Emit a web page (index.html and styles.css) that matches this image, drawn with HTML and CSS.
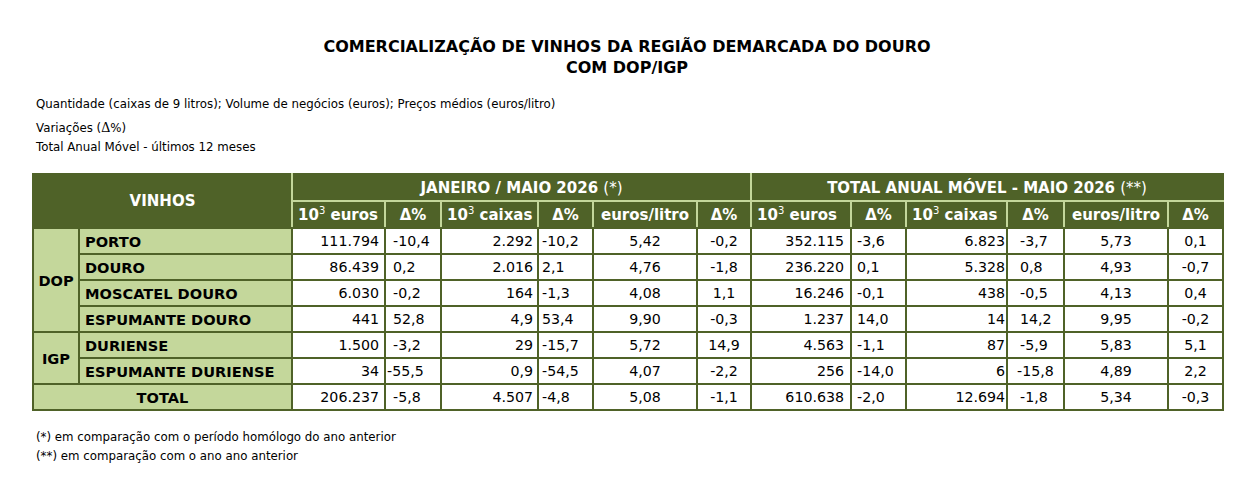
FILE: index.html
```html
<!DOCTYPE html>
<html lang="pt">
<head>
<meta charset="utf-8">
<title>Comercialização de Vinhos da Região Demarcada do Douro</title>
<link rel="stylesheet" href="styles.css">
</head>
<body>
<div class="page">
  <h1 class="title">COMERCIALIZAÇÃO DE VINHOS DA REGIÃO DEMARCADA DO DOURO<br>COM DOP/IGP</h1>
  <div class="notes">
    <p class="note n1">Quantidade (caixas de 9 litros); Volume de negócios (euros); Preços médios (euros/litro)</p>
    <p class="note n2">Variações (<span class="delta">Δ</span>%)</p>
    <p class="note n3">Total Anual Móvel - últimos 12 meses</p>
  </div>
  <table class="wine">
    <colgroup>
      <col class="c-grp"><col class="c-name">
      <col class="c-eur"><col class="c-d1"><col class="c-cx"><col class="c-d2"><col class="c-el"><col class="c-d3">
      <col class="c-eur2"><col class="c-d4"><col class="c-cx2"><col class="c-d5"><col class="c-el2"><col class="c-d6">
    </colgroup>
    <thead>
      <tr class="h1">
        <th colspan="2" rowspan="2" class="vinhos">VINHOS</th>
        <th colspan="6" class="grp">JANEIRO / MAIO 2026 <span class="ast">(*)</span></th>
        <th colspan="6" class="grp">TOTAL ANUAL MÓVEL - MAIO 2026 <span class="ast">(**)</span></th>
      </tr>
      <tr class="h2">
        <th class="hl">10<sup>3</sup> euros</th><th>Δ%</th><th class="hl">10<sup>3</sup> caixas</th><th>Δ%</th><th>euros/litro</th><th>Δ%</th>
        <th class="hl">10<sup>3</sup> euros</th><th>Δ%</th><th class="hl">10<sup>3</sup> caixas</th><th>Δ%</th><th>euros/litro</th><th>Δ%</th>
      </tr>
    </thead>
    <tbody>
      <tr>
        <td rowspan="4" class="grp-cell">DOP</td>
        <td class="name">PORTO</td>
        <td class="r a">111.794</td><td class="d d1">-10,4</td><td class="r b">2.292</td><td class="d d2">-10,2</td><td class="c">5,42</td><td class="c">-0,2</td>
        <td class="r e">352.115</td><td class="d d4">-3,6</td><td class="r f">6.823</td><td class="d d5">-3,7</td><td class="c">5,73</td><td class="c">0,1</td>
      </tr>
      <tr>
        <td class="name">DOURO</td>
        <td class="r a">86.439</td><td class="d d1">0,2</td><td class="r b">2.016</td><td class="d d2">2,1</td><td class="c">4,76</td><td class="c">-1,8</td>
        <td class="r e">236.220</td><td class="d d4">0,1</td><td class="r f">5.328</td><td class="d d5">0,8</td><td class="c">4,93</td><td class="c">-0,7</td>
      </tr>
      <tr>
        <td class="name">MOSCATEL DOURO</td>
        <td class="r a">6.030</td><td class="d d1">-0,2</td><td class="r b">164</td><td class="d d2">-1,3</td><td class="c">4,08</td><td class="c">1,1</td>
        <td class="r e">16.246</td><td class="d d4">-0,1</td><td class="r f">438</td><td class="d d5">-0,5</td><td class="c">4,13</td><td class="c">0,4</td>
      </tr>
      <tr>
        <td class="name">ESPUMANTE DOURO</td>
        <td class="r a">441</td><td class="d d1">52,8</td><td class="r b">4,9</td><td class="d d2">53,4</td><td class="c">9,90</td><td class="c">-0,3</td>
        <td class="r e">1.237</td><td class="d d4">14,0</td><td class="r f">14</td><td class="d d5">14,2</td><td class="c">9,95</td><td class="c">-0,2</td>
      </tr>
      <tr>
        <td rowspan="2" class="grp-cell">IGP</td>
        <td class="name">DURIENSE</td>
        <td class="r a">1.500</td><td class="d d1">-3,2</td><td class="r b">29</td><td class="d d2">-15,7</td><td class="c">5,72</td><td class="c">14,9</td>
        <td class="r e">4.563</td><td class="d d4">-1,1</td><td class="r f">87</td><td class="d d5">-5,9</td><td class="c">5,83</td><td class="c">5,1</td>
      </tr>
      <tr>
        <td class="name">ESPUMANTE DURIENSE</td>
        <td class="r a">34</td><td class="d d1 long">-55,5</td><td class="r b">0,9</td><td class="d d2">-54,5</td><td class="c">4,07</td><td class="c">-2,2</td>
        <td class="r e">256</td><td class="d d4">-14,0</td><td class="r f">6</td><td class="d d5 long">-15,8</td><td class="c">4,89</td><td class="c">2,2</td>
      </tr>
      <tr class="total">
        <td colspan="2" class="total-cell">TOTAL</td>
        <td class="r a">206.237</td><td class="d d1">-5,8</td><td class="r b">4.507</td><td class="d d2">-4,8</td><td class="c">5,08</td><td class="c">-1,1</td>
        <td class="r e">610.638</td><td class="d d4">-2,0</td><td class="r f">12.694</td><td class="d d5">-1,8</td><td class="c">5,34</td><td class="c">-0,3</td>
      </tr>
    </tbody>
  </table>
  <div class="foot">
    <p class="note">(*) em comparação com o período homólogo do ano anterior</p>
    <p class="note">(**) em comparação com o ano ano anterior</p>
  </div>
</div>
</body>
</html>
```
FILE: styles.css
```css
html, body {
  margin: 0;
  padding: 0;
  background: #ffffff;
}
body {
  font-family: "DejaVu Sans", Verdana, sans-serif;
  color: #000;
}
.page {
  padding: 36px 0 0 32px;
  width: 1190px;
}
.title {
  margin: 0;
  font-size: 16px;
  line-height: 21px;
  font-weight: bold;
  text-align: center;
  width: 1190px;
}
.notes {
  margin-top: 17px;
}
.note {
  margin: 0 0 0 4px;
  font-size: 11.8px;
  line-height: 19px;
}
.n1 { height: 23px; }
.delta {
  font-family: "Liberation Serif", "DejaVu Serif", serif;
  font-size: 14px;
}
.wine {
  margin-top: 16px;
  border-collapse: collapse;
  table-layout: fixed;
  width: 1190px;
  font-size: 14.2px;
}
.c-grp { width: 46px; }
.c-name { width: 213px; }
.c-eur { width: 93px; }
.c-d1 { width: 56px; }
.c-cx { width: 97px; }
.c-d2 { width: 55px; }
.c-el { width: 104px; }
.c-d3 { width: 54px; }
.c-eur2 { width: 100px; }
.c-d4 { width: 55px; }
.c-cx2 { width: 101px; }
.c-d5 { width: 57px; }
.c-el2 { width: 104px; }
.c-d6 { width: 55px; }

.wine th {
  background: #4f6228;
  color: #ffffff;
  font-weight: bold;
  border: 2px solid #c4d79b;
  padding: 0 4px;
  white-space: nowrap;
  overflow: hidden;
  font-size: 15px;
}
.wine thead tr:first-child th { border-top: 2px solid #4f6228; }
.wine thead th:first-child { border-left: 2px solid #4f6228; }
.wine thead tr.h1 th:last-child,
.wine thead tr.h2 th:last-child { border-right: 2px solid #4f6228; }
.wine thead tr.h2 th { border-bottom: 2px solid #4f6228; }
.wine thead th.vinhos { border-bottom: 2px solid #4f6228; }
.h1 { height: 27px; }
.h2 { height: 27px; }
.h2 th { text-align: center; }
.h2 th.hl { text-align: left; padding-left: 5px; }
.grp .ast { font-weight: normal; }
.vinhos { text-align: center; }
sup {
  font-size: 10px;
  font-weight: normal;
  vertical-align: 6px;
  line-height: 0;
}

.wine td {
  border: 2px solid #4f6228;
  padding: 0;
  height: 24px;
  white-space: nowrap;
  background: #ffffff;
}
.wine tbody tr { height: 26px; }
.grp-cell, .name, .total-cell {
  background: #c4d79b !important;
  font-weight: bold;
  font-size: 14.6px;
}
.grp-cell { text-align: center; }
.name { padding-left: 5px !important; }
.total-cell { text-align: center; }
.r { text-align: right; }
.a { padding-right: 5px !important; }
.b { padding-right: 4px !important; }
.e { padding-right: 6px !important; }
.f { padding-right: 1px !important; }
.d { text-align: left; }
.d1 { padding-left: 7px !important; }
.d2 { padding-left: 3px !important; }
.d4 { padding-left: 5px !important; }
.d5 { padding-left: 12px !important; }
.d1.long { padding-left: 1px !important; }
.d5.long { padding-left: 9px !important; }
.c { text-align: center; }

.foot {
  margin-top: 17px;
}
```
